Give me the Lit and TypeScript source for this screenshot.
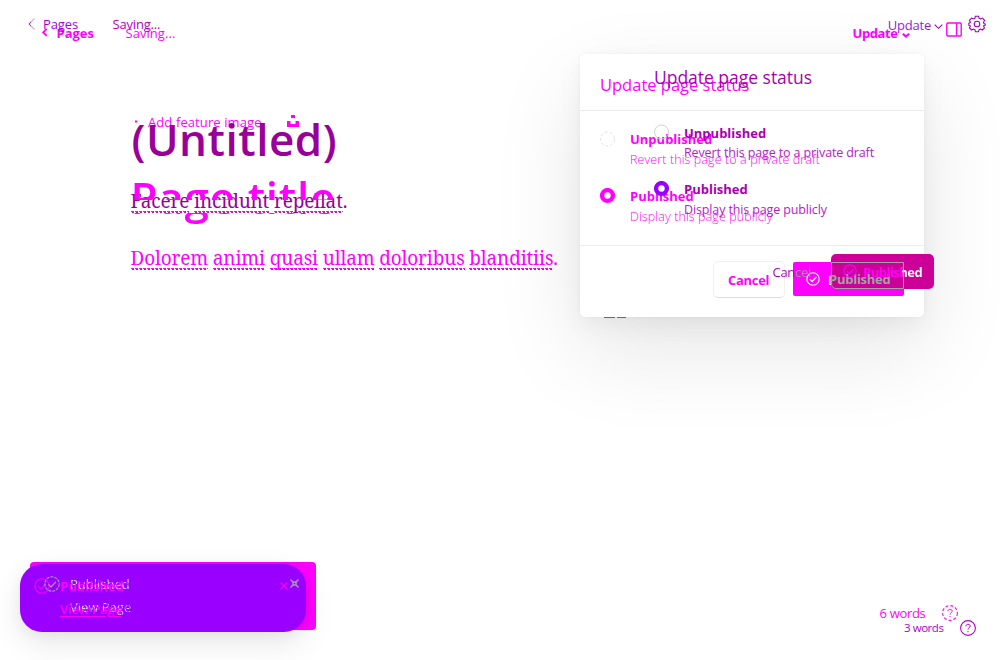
import { LitElement, html, css, svg } from "lit";
import { customElement } from "lit/decorators.js";

const HOT = "#ff00ff";

const icon = (w: number, h: number, body: unknown) =>
  html`<svg width=${w} height=${h} viewBox="0 0 ${w} ${h}" fill="none">${body}</svg>`;

const check = (color: string, size: number, dash = "") => icon(size, size, svg`
  <circle cx=${size / 2} cy=${size / 2} r=${size / 2 - 0.8} stroke=${color} stroke-width="1.1" stroke-dasharray=${dash}/>
  <path d="M${size * 0.28} ${size * 0.52} L${size * 0.44} ${size * 0.68} L${size * 0.75} ${size * 0.36}" stroke=${color} stroke-width="1.2"/>`);

const help = (color: string, dash: string) => icon(16, 16, svg`
  <circle cx="8" cy="8" r="7.4" stroke=${color} stroke-width="1.1" stroke-dasharray=${dash}/>
  <path d="M5.9 6.3C5.9 3.6 10.3 3.7 10.2 6.2C10.1 7.7 8.1 7.6 8 9.6M8 11V12.2" stroke=${color} stroke-width="1"/>`);

const radioOn = (color: string) => icon(16, 16, svg`<circle cx="7.5" cy="7.5" r="5.4" stroke=${color} stroke-width="4.4" fill="#fff"/>`);
const radioOff = (color: string, dash: string) => icon(16, 16, svg`<circle cx="7.5" cy="8" r="7" stroke=${color} stroke-width="1" stroke-dasharray=${dash}/>`);

const gear = icon(18, 18, svg`
  <path d="M7.4 1.2H10.6L11.1 3.3L12.5 4L14.5 3.1L16.6 5.3L15.5 7.2L16 8.5L17.2 9V10.2L15.5 10.9L16.5 12.9L14.4 15L12.5 14.1L11.1 14.7L10.5 16.8H7.5L6.9 14.7L5.5 14.1L3.5 15L1.4 12.9L2.4 10.9L.8 10.2V8.2L2.4 7.2L1.4 5.3L3.6 3.1L5.5 4L6.9 3.3Z" stroke="#a000b8" stroke-width="1.1"/>
  <circle cx="9" cy="9" r="2.8" stroke="#a000b8" stroke-width="1.1"/>`);

const spelled = (line: string) => {
  const words = line.replace(/\.$/, "").split(" ");
  return words.map((w, i) => html`<span class="misspelt">${w}</span>${i < words.length - 1 ? " " : "."}`);
};

@customElement("app-root")
export class AppRoot extends LitElement {
  static styles = css`
    :host { display: grid; width: 1000px; height: 660px; overflow: hidden; background: #fff;
      grid-template: 660px / 1000px; font: 400 13px/20px "Open Sans", "Noto Sans", sans-serif; color: #f0f; white-space: pre; }
    svg { display: block; flex: none; }
    .layer { grid-area: 1 / 1; display: flex; flex-direction: column; box-sizing: border-box; min-width: 0; }
    .row { display: flex; align-items: flex-start; }
    .push { margin-left: auto; }
    .bold { font-weight: 700; }

    .before { padding-top: 23px; }
    .bar-a { padding: 0 38px 0 41.5px; height: 89px; }
    .bar-a .chev { margin: 5px 9px 0 0; }
    .bar-a .save { margin-left: 31.5px; letter-spacing: .05px; }
    .bar-a .upd { letter-spacing: -.42px; }
    .bar-a .caret { margin: 10px 36px 0 4.5px; }
    .bar-a .panel { margin-top: -1px; }
    .feature { padding-left: 132px; height: 61px; }
    .feature .plus { margin: 7px 8px 0 0; }
    .feature .photo { margin: 3px 0 0 25px; }
    .feature .label { letter-spacing: .1px; }
    .headline { font-size: 44px; line-height: 60px; font-weight: 600; }
    .headline.a { margin-left: 130.5px; letter-spacing: .7px; width: 230px; margin-top: -6px;
      -webkit-mask-image: linear-gradient(#000 0 33px, transparent 33px 46px, #000 46px);
      mask-image: linear-gradient(#000 0 33px, transparent 33px 46px, #000 46px); }
    .headline.b { margin: 74px 0 0 131.5px; color: #990099; letter-spacing: .5px; }

    .after { padding-top: 14px; color: #a800d8; }
    .bar-b { padding: 0 14px 0 28px; height: 21px; }
    .bar-b .chev { margin: 4px 8px 0 0; }
    .bar-b .pages { letter-spacing: -.1px; }
    .bar-b .save { color: #b800c4; margin-left: 34.5px; letter-spacing: -.2px; }
    .bar-b .upd { margin-top: 1px; letter-spacing: -.2px; color: #9c1ad8; }
    .bar-b .caret { margin: 10px 25px 0 3px; }
    .bar-b .gear { margin-top: 1px; }
    .prose { font: 400 19px/30px "Noto Serif", "DejaVu Serif", serif; letter-spacing: -.17px; margin-left: 130.5px; }
    .prose.one { margin-top: 17px; color: #990099; text-shadow: 1px 0 #fff, -1px 0 #fff; }
    .prose.two { margin-top: 27px; color: #f0f; }
    .misspelt { display: inline-block; height: 27px; line-height: 30px; vertical-align: top;
      background:
        repeating-linear-gradient(90deg, #f0f 0 3px, #fff 3px 4px) 0 25px / 100% 1px no-repeat,
        repeating-linear-gradient(90deg, #fff 0 1px, #e000c0 1px 3px, #fff 3px 4px) 0 26px / 100% 1px no-repeat; }

    .overlay { padding: 54px 0 0 580px; }
    .dialog { width: 344px; height: 263px; border-radius: 5px; background: #fff; display: grid; grid-template: 263px / 344px;
      box-shadow: 0 0 4px rgba(0,0,0,.04), 0 8px 24px rgba(0,0,0,.05), 0 34px 90px rgba(0,0,0,.1); }
    .dialog > * { grid-area: 1 / 1; }
    .frame { display: grid; grid-template-rows: 56px 135px 1fr; }
    .frame > div + div { border-top: 1px solid #ebebeb; }
    .side { display: flex; flex-direction: column; }
    .side.a { padding: 18px 20px 0; }
    .side.b { padding: 10px 0 0 74px; color: #a800b0; }
    .heading { line-height: 26px; }
    .side.a .heading { font-size: 16.5px; height: 57px; }
    .side.b .heading { font-size: 17.5px; height: 59px; letter-spacing: -.02px; }
    .option { display: flex; height: 57px; }
    .side.b .option { height: 56px; }
    .option .dot { margin: 2px 14px 0 0; }
    .side.b .option .dot { margin: 1px 14px 0 0; }
    .side.b .option + .option .dot { margin-top: 2px; }
    .side.b .option + .option .desc { margin-top: 1px; }
    .option .desc { font-size: 12.5px; letter-spacing: -.13px; }
    .side.b .desc { color: #b520c8; }
    .side.a .desc { font-weight: 300; letter-spacing: .1px; margin-top: 1px; }
    .side.a .actions { display: flex; margin: 19px 0 0 113px; gap: 8px; }
    .cancel-box { box-sizing: border-box; width: 72px; height: 37px; margin-top: -1px; border: 1px solid #f0f0f0; border-bottom-color: #ddd;
      border-radius: 5px; padding: 8px 14px; letter-spacing: -.3px; }
    .confirm-a { display: flex; gap: 8px; box-sizing: border-box; width: 111px; height: 34px; border-radius: 2px; background: #f0f; padding: 8px 0 0 13px; }
    .confirm-a svg { margin-top: 2px; }
    .confirm-a span { color: #fff; letter-spacing: -.15px; }
    .side.b .actions { display: flex; margin: 19px -10px 0 118.5px; }
    .cancel-b { color: transparent; background: linear-gradient(90deg, #a800b0 55%, #999 60%); -webkit-background-clip: text; background-clip: text; letter-spacing: -.3px; margin: 8px 20.5px 0 0; width: 38px; height: 20px; }
    .confirm-b { flex: none; display: grid; width: 103px; height: 35px; border-radius: 5px; background: #cc0099; }
    .confirm-b > * { grid-area: 1 / 1; }
    .shared { width: 71px; height: 25px; margin-top: 8px; border: 1px solid #a3a3a3; border-bottom-left-radius: 5px; }
    .ghost { margin: 15px 0 0 -2px; color: #a3a3a3; letter-spacing: -.25px; }
    .confirm-b .main { display: flex; gap: 6px; padding: 8px 0 0 12px; }
    .confirm-b .main svg { margin-top: 2px; }
    .confirm-b .main span { height: 20px; letter-spacing: -.5px; color: transparent; background: linear-gradient(90deg, #f0f 39px, #fff 39px); -webkit-background-clip: text; background-clip: text; }
    .peek { display: flex; gap: 2px; margin: 0 0 0 24px; align-self: end; height: 1px; transform: translateY(1px); }
    .peek i { width: 11px; background: #f0f; }
    .peek i + i { width: 9px; }

    .toast-a { padding: 562px 0 0 30px; }
    .toast-a div { width: 286px; height: 68px; border-radius: 4px; background: #f0f; }
    .toast-b { padding: 564px 0 0 20px; }
    .toast-b > div { width: 286px; height: 67.5px; border-radius: 22px; background: #9900ff; display: grid; grid-template-columns: 286px;
      box-shadow: 0 3px 14px rgba(0,0,0,.05), 0 12px 32px rgba(0,0,0,.09); }
    .note { grid-area: 1 / 1; display: flex; }
    .note.noisy { color: #d6cbe2; padding: 10px 7px 0 24px; gap: 10px; }
    .note.noisy .lines {
      -webkit-mask-image: repeating-linear-gradient(60deg, #000 0 2px, rgba(0,0,0,.35) 2px 3.5px);
      mask-image: repeating-linear-gradient(60deg, #000 0 2px, rgba(0,0,0,.35) 2px 3.5px); }
    .note.hot { color: #f0f; padding: 12px 18px 0 14px; gap: 10px; font-weight: 600; }
    .note .lines { display: flex; flex-direction: column; gap: 3px; height: 48px; }
    .note.hot .link { text-decoration: underline; text-underline-offset: 2px; letter-spacing: -.25px; }
    .note.noisy svg { margin-top: 2px; }
    .note.hot svg { margin-top: 2px; }
    .note .x { margin-left: auto; }
    .note.hot .x { margin-top: 4px; }
    .note.noisy .x { margin-top: 3px; }

    .foot { flex-direction: row; justify-content: flex-end; }
    .foot.a { padding: 603px 42px 0 0; gap: 16.5px; }
    .foot.a span { letter-spacing: -.3px; }
    .foot.a svg { margin-top: 2px; }
    .foot.b { padding: 618px 24px 0 0; gap: 16.5px; color: #b000d0; font-size: 11.5px; }
    .foot.b span { font-weight: 500; letter-spacing: -.45px; }
    .foot.b svg { margin-top: 2px; }
  `;

  render() {
    return html`
      <div class="layer before">
        <div class="row bar-a">
          <div class="chev">${icon(6, 9, svg`<path d="M4.8 .8L1.2 4.3L4.8 7.8" stroke=${HOT} stroke-width="1.8"/>`)}</div>
          <span class="bold">Pages</span><span class="save">Saving...</span>
          <span class="bold upd push">Update</span>
          <div class="caret">${icon(8, 5, svg`<path d="M.8 .8L4 3.6L7.2 .8" stroke=${HOT} stroke-width="2"/>`)}</div>
          <div class="panel">${icon(16, 15, svg`<path d="M1.6 1H14.4L15.2 1.8V13.2L14.4 14H1.6L.8 13.2V1.8ZM10.6 1V14" stroke=${HOT} stroke-width="1.4"/>`)}</div>
        </div>
        <div class="row feature">
          <div class="plus">${icon(8, 4, svg`<path d="M3 2.5H5.4" stroke=${HOT} stroke-width="2"/><path d="M0 2H1M7 2H8" stroke="#ddd"/>`)}</div>
          <span class="label">Add feature image</span>
          <div class="photo">${icon(12, 12, svg`<path d="M4 0H8V3H4ZM0 6H3.5V9H8.5V6H12V12H0Z" fill=${HOT}/>`)}</div>
        </div>
        <div class="headline a">Page title</div>
      </div>

      <div class="layer after">
        <div class="row bar-b">
          <div class="chev">${icon(7, 12, svg`<path d="M6.5 .5L1 6L6.5 11.5" stroke="#c9b6d6" stroke-width="1.2"/><path d="M3 4L1 6L3 8" stroke="#a030e8"/>`)}</div>
          <span class="pages">Pages</span><span class="save">Saving...</span>
          <span class="upd push">Update</span>
          <div class="caret">${icon(9, 6, svg`<path d="M.7 .7L4.5 4.3L8.3 .7" stroke="#a000b8" stroke-width="1.1"/>`)}</div>
          <div class="gear">${gear}</div>
        </div>
        <div class="headline b">(Untitled)</div>
        <div class="prose one">${spelled("Facere incidunt repellat.")}</div>
        <div class="prose two">${spelled("Dolorem animi quasi ullam doloribus blanditiis.")}</div>
      </div>

      <div class="layer foot a"><span>6 words</span>${help(HOT, "3 2")}</div>
      <div class="layer foot b"><span>3 words</span>${help("#b000c8", "")}</div>

      <div class="layer overlay">
        <div class="dialog">
          <div class="frame"><div></div><div></div><div></div></div>
          <div class="side a">
            <div class="heading">Update page status</div>
            <div class="option"><div class="dot">${radioOff("#e2e2e2", "3 2")}</div><div><div class="bold">Unpublished</div><div class="desc">Revert this page to a private draft</div></div></div>
            <div class="option"><div class="dot">${radioOn(HOT)}</div><div><div class="bold">Published</div><div class="desc">Display this page publicly</div></div></div>
            <div class="actions">
              <div class="cancel-box bold">Cancel</div>
              <div class="confirm-a">${check("#fff", 14)}<span class="bold">P</span></div>
            </div>
          </div>
          <div class="side b">
            <div class="heading">Update page status</div>
            <div class="option"><div class="dot">${radioOff("#cfcfcf", "")}</div><div><div class="bold">Unpublished</div><div class="desc">Revert this page to a private draft</div></div></div>
            <div class="option"><div class="dot">${radioOn("#9900ff")}</div><div><div class="bold">Published</div><div class="desc">Display this page publicly</div></div></div>
            <div class="actions">
              <span class="cancel-b">Cancel</span>
              <div class="confirm-b">
                <div class="shared"></div>
                <span class="ghost bold">Published</span>
                <div class="main">${check(HOT, 14)}<span class="bold">Published</span></div>
              </div>
            </div>
          </div>
          <div class="peek"><i></i><i></i></div>
        </div>
      </div>

      <div class="layer toast-a"><div></div></div>
      <div class="layer toast-b"><div>
        <div class="note hot">
          ${check(HOT, 16)}
          <div class="lines"><span class="bold">Published</span><span class="link">View Page</span></div>
          <div class="x">${icon(8, 8, svg`<path d="M.5 .5L7.5 7.5M7.5 .5L.5 7.5" stroke=${HOT} stroke-width="1.1"/>`)}</div>
        </div>
        <div class="note noisy">
          ${check("#a8a0b0", 16, "3 1")}
          <div class="lines"><span>Published</span><span>View Page</span></div>
          <div class="x">${icon(9, 9, svg`<path d="M.5 .5L3 3M8.5 .5L6 3M.5 8.5L3 6M8.5 8.5L6 6M3 3H6V6H3Z" stroke="#a8a0b0" stroke-width="1.4"/>`)}</div>
        </div>
      </div></div>
    `;
  }
}
